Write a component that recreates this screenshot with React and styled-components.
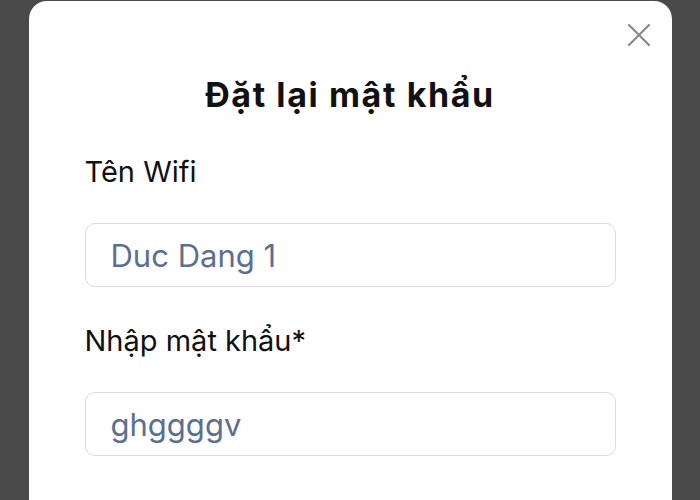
import React from 'react';
import styled, { createGlobalStyle } from 'styled-components';

const GlobalStyle = createGlobalStyle`
    html, body {
        margin: 0;
        height: 100%;
        overflow: hidden;
        background: #4a4a4a;
    }
    body {
        font-family: Inter, "Noto Sans", "Liberation Sans", sans-serif;
    }
`;

const _Backdrop = styled.div`
    width: 700px;
    height: 500px;
    overflow: hidden;
    display: flex;
    justify-content: center;
    align-items: flex-start;
    background: #4a4a4a;
`;

const _Modal = styled.div`
    position: relative;
    box-sizing: border-box;
    width: 643px;
    height: 499px;
    margin-top: 1px;
    padding: 68px 56px 0;
    background: #fff;
    border-radius: 18px 18px 0 0;
`;

const _CloseBtn = styled.button`
    position: absolute;
    top: 22px;
    right: 21px;
    width: 24px;
    height: 24px;
    padding: 0;
    border: none;
    background: none;
    display: flex;
    align-items: center;
    justify-content: center;
`;

const _Title = styled.h2`
    margin: 0;
    height: 52px;
    line-height: 52px;
    text-align: center;
    font-size: 34px;
    letter-spacing: 1.6px;
    font-weight: 700;
    color: #111;
`;

const _Field = styled.div`
    display: flex;
    flex-direction: column;
    margin-top: ${(p) => p.gap}px;
`;

const _Label = styled.label`
    height: 36px;
    line-height: 36px;
    font-size: 29px;
    color: #111;
`;

const _Input = styled.div`
    box-sizing: border-box;
    margin-top: 33px;
    height: 64px;
    padding: 0 25px;
    display: flex;
    align-items: center;
    border: 1px solid #dcdcdc;
    border-radius: 10px;
    font-size: 31px;
    color: #5b7090;
`;

const CloseIcon = () => (
    <svg width="24" height="24" viewBox="0 0 24 24">
        <path d="M2 2 L22 22 M22 2 L2 22" stroke="#8a8a8a" strokeWidth="2.2" strokeLinecap="round" fill="none" />
    </svg>
);

const Field = ({ label, value, gap }) => (
    <_Field gap={gap}>
        <_Label>{label}</_Label>
        <_Input>{value}</_Input>
    </_Field>
);

export default function App() {
    return (
        <>
            <GlobalStyle />
            <_Backdrop>
                <_Modal>
                    <_CloseBtn aria-label="close">
                        <CloseIcon />
                    </_CloseBtn>
                    <_Title>Đặt lại mật khẩu</_Title>
                    <Field gap={33} label="Tên Wifi" value="Duc Dang 1" />
                    <Field gap={36} label="Nhập mật khẩu*" value="ghggggv" />
                </_Modal>
            </_Backdrop>
        </>
    );
}
